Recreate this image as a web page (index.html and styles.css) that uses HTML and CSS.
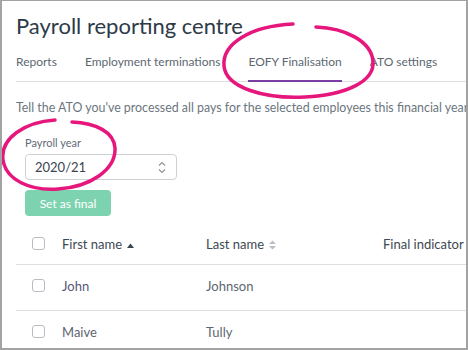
FILE: index.html
```html
<!DOCTYPE html>
<html lang="en">
<head>
  <meta charset="UTF-8">
  <title>Payroll reporting centre</title>
  <link rel="stylesheet" href="styles.css">
</head>
<body>
  <div class="frame">
    <h1 class="title">Payroll reporting centre</h1>

    <nav class="tabs">
      <a class="tab">Reports</a>
      <a class="tab">Employment terminations</a>
      <a class="tab active">EOFY Finalisation</a>
      <a class="tab">ATO settings</a>
    </nav>

    <p class="intro">Tell the ATO you've processed all pays for the selected employees this financial year</p>

    <div class="field">
      <label class="field-label">Payroll year</label>
      <div class="select-box">
        <span>2020/21</span>
        <svg class="chevrons" width="8" height="13" viewBox="0 0 8 13">
          <path d="M1 4.5 L4 1.5 L7 4.5 M1 8.5 L4 11.5 L7 8.5" fill="none" stroke="#8b939b" stroke-width="1.1"/>
        </svg>
      </div>
    </div>

    <button class="btn-final">Set as final</button>

    <table class="emp-table">
      <thead>
        <tr>
          <th class="col-check"><span class="checkbox"></span></th>
          <th class="col-first">First name
            <svg class="sort" width="7" height="5" viewBox="0 0 7 5"><path d="M0 5 L3.5 0.5 L7 5 Z" fill="#3a4450"/></svg>
          </th>
          <th class="col-last">Last name
            <svg class="sort" width="7" height="10" viewBox="0 0 7 10"><path d="M0 4 L3.5 0.5 L7 4 Z M0 6 L3.5 9.5 L7 6 Z" fill="#b9bec4"/></svg>
          </th>
          <th class="col-final">Final indicator</th>
        </tr>
      </thead>
      <tbody>
        <tr>
          <td class="col-check"><span class="checkbox"></span></td>
          <td class="name link">John</td>
          <td class="name">Johnson</td>
          <td></td>
        </tr>
        <tr>
          <td class="col-check"><span class="checkbox"></span></td>
          <td class="name">Maive</td>
          <td class="name">Tully</td>
          <td></td>
        </tr>
      </tbody>
    </table>

    <!-- hand drawn highlight marks -->
    <svg class="marks" width="468" height="350" viewBox="0 0 468 350">
      <path d="M293 24 C250 26 222 44 224 66 C226 88 265 99 305 97 C345 95 375 82 373 61 C371 41 345 28 316 27" fill="none" stroke="#e6177c" stroke-width="3.5" stroke-linecap="round"/>
      <path d="M55 120 C25 122 0 138 3 160 C6 180 30 191 58 189 C90 187 116 170 115 148 C114 132 96 123 72 122" fill="none" stroke="#e6177c" stroke-width="3.5" stroke-linecap="round"/>
    </svg>
  </div>
</body>
</html>
```

FILE: styles.css
```css
/* Basic Reset */
* {
  margin: 0;
  padding: 0;
  box-sizing: border-box;
  font-family: Lato, "Open Sans", sans-serif;
}

body {
  background-color: #fff;
  overflow: hidden;
}

/* Outer frame */
.frame {
  position: relative;
  width: 468px;
  height: 350px;
  border-style: solid;
  border-color: #a3a3a3;
  border-width: 1px 2px 2px 2px;
  padding-left: 14px;
  overflow: hidden;
}

.title {
  font-size: 22px;
  font-weight: 400;
  color: #2d3a47;
  line-height: 26px;
  margin-top: 12px;
}

/* Tabs */
.tabs {
  display: flex;
  gap: 28px;
  margin-top: 15px;
  border-bottom: 1px solid #dcdfe2;
}

.tab {
  font-size: 12px;
  color: #5c6772;
  padding-bottom: 10px;
  line-height: 16px;
  margin-bottom: -1px;
  border-bottom: 2px solid transparent;
}

.tab.active {
  border-bottom-color: #7a3fa3;
}

.intro {
  font-size: 12.4px;
  color: #6c7680;
  margin-top: 18px;
  line-height: 16px;
  white-space: nowrap;
}

/* Payroll year field */
.field {
  margin-left: 9px;
  margin-top: 20px;
}

.field-label {
  display: block;
  font-size: 11px;
  color: #5f6a75;
  line-height: 14px;
  margin-bottom: 4px;
}

.select-box {
  display: flex;
  align-items: center;
  justify-content: space-between;
  width: 152px;
  height: 26px;
  border: 1px solid #cdd1d5;
  border-radius: 4px;
  padding: 0 10px 0 9px;
  font-size: 13px;
  color: #3a4450;
}

.btn-final {
  margin: 10px 0 0 9px;
  width: 86px;
  height: 26px;
  background-color: #7dd3af;
  color: #fff;
  border: none;
  border-radius: 4px;
  font-size: 12px;
}

/* Employee table */
.emp-table {
  width: 450px;
  margin-top: 8px;
  border-collapse: collapse;
  font-size: 13px;
}

.emp-table th {
  height: 40px;
  text-align: left;
  font-weight: 400;
  color: #3d4852;
  border-bottom: 1px solid #dcdfe2;
  white-space: nowrap;
}

.emp-table td {
  height: 46px;
  padding-bottom: 3px;
  border-bottom: 1px solid #dcdfe2;
  color: #5d6671;
}

.col-check {
  width: 46px;
  padding-left: 16px;
}

.col-first {
  width: 144px;
}

.col-last {
  width: 177px;
}

.checkbox {
  display: block;
  width: 13px;
  height: 13px;
  border: 1px solid #b9bdc3;
  border-radius: 3px;
}

.sort {
  margin-left: 2px;
  vertical-align: middle;
}

.name.link {
  color: #5a5577;
}

/* Annotation overlay */
.marks {
  position: absolute;
  top: -1px;
  left: -2px;
  pointer-events: none;
}
```
